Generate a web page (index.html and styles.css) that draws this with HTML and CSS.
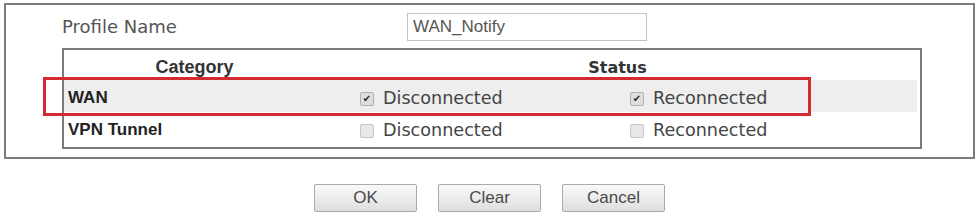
FILE: index.html
```html
<!DOCTYPE html>
<html lang="en">
<head>
  <meta charset="UTF-8" />
  <title>Notification Profile</title>
  <link rel="stylesheet" href="styles.css">
</head>
<body>
  <div class="panel">
    <div class="profile-row">
      <span class="profile-label">Profile Name</span>
      <div class="text-input">WAN_Notify</div>
    </div>
    <div class="status-table">
      <div class="th th-category">Category</div>
      <div class="th th-status">Status</div>

      <div class="row row-alt">
        <div class="cell cell-name">WAN</div>
        <div class="cell cell-check"><span class="cbox checked">&#10004;</span>Disconnected</div>
        <div class="cell cell-check"><span class="cbox checked">&#10004;</span>Reconnected</div>
      </div>

      <div class="row">
        <div class="cell cell-name">VPN Tunnel</div>
        <div class="cell cell-check"><span class="cbox"></span>Disconnected</div>
        <div class="cell cell-check"><span class="cbox"></span>Reconnected</div>
      </div>
    </div>
  </div>

  <div class="highlight"></div>

  <div class="buttons">
    <button class="btn">OK</button>
    <button class="btn">Clear</button>
    <button class="btn">Cancel</button>
  </div>
</body>
</html>
```

FILE: styles.css
```css
body { margin: 0; background: #fff; font-family: "DejaVu Sans", Verdana, sans-serif; color: #444; position: relative; width: 979px; height: 214px; overflow: hidden; }

.panel { margin: 3px 4px 0; border: 2px solid #7d7d7d; padding: 0 51px 8px 56px; }

.profile-row { display: flex; align-items: center; height: 43px; }
.profile-label { width: 345px; font-size: 18px; color: #555; }
.text-input { width: 233px; height: 26px; border: 1px solid #c4c4c4; padding: 0 0 0 5px; font-family: "Liberation Sans", Arial, sans-serif; font-size: 17px; line-height: 26px; color: #555; }

.status-table { border: 2px solid #7a7a7a; display: grid; grid-template-columns: 261px 270px 1fr; }
.th { height: 30px; display: flex; align-items: center; justify-content: center; padding-top: 4px; box-sizing: border-box; }
.th-category { font-family: "Liberation Sans", Arial, sans-serif; font-weight: bold; font-size: 18px; color: #333; }
.th-status { grid-column: 2 / 4; font-weight: bold; font-size: 16px; color: #333; padding-right: 10px; }

.row { display: contents; }
.cell { display: flex; align-items: center; height: 32px; padding-top: 3px; box-sizing: border-box; }
.row:last-child .cell { height: 35px; padding-top: 1px; }
.row-alt .cell { background: #eeeeee; }
.row-alt .cell:last-child { margin-right: 3px; }

.cell-name { padding-left: 4px; font-family: "Liberation Sans", Arial, sans-serif; font-weight: bold; font-size: 17px; color: #222; }
.cell-check { padding-left: 35px; font-size: 17.6px; color: #444; }

.cbox { width: 12px; height: 12px; border: 1px solid #c6c6c6; background: #e8e8e8; border-radius: 2px; margin: 2px 9px 0 0; font-size: 10px; line-height: 12px; text-align: center; color: #2a2a2a; }
.cbox.checked { border-color: #b0b0b0; background: #dedede; }

.highlight { position: absolute; left: 43px; top: 77px; width: 762px; height: 33px; border: 3px solid #d42a30; }

.buttons { display: flex; justify-content: center; gap: 21px; margin-top: 25px; }
.btn { width: 103px; height: 28px; border: 1px solid #aaa; border-radius: 2px; background: linear-gradient(#fafafa, #dedede); font-family: "Liberation Sans", Arial, sans-serif; font-size: 17px; color: #4a4a4a; padding: 0; }
```
